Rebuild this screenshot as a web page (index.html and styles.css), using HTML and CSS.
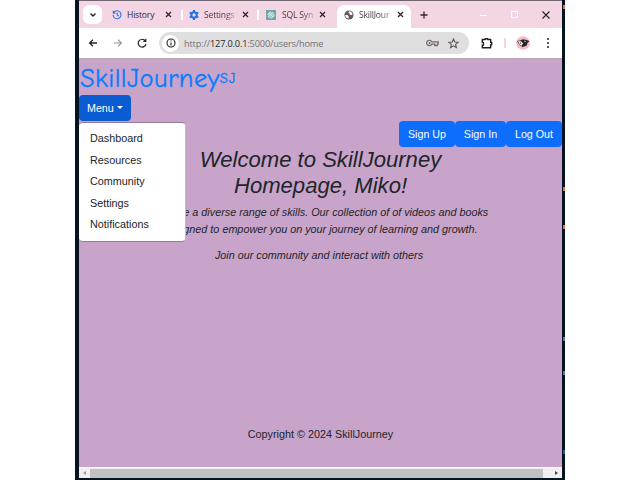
FILE: index.html
```html
<!DOCTYPE html>
<html lang="en">
<head>
<meta charset="utf-8">
<title>SkillJourney</title>
<link rel="stylesheet" href="styles.css">
</head>
<body>
<div class="desktop">
  <div class="window">
    <div class="tabs">
      <div class="tab-search"><svg width="8" height="8" viewBox="0 0 8 8"><path d="M1.5 2.5 4 5l2.5-2.5" fill="none" stroke="#222" stroke-width="1.4"/></svg></div>
      <div class="tab tab-history">
        <svg width="10" height="10" viewBox="0 0 10 10"><path d="M1.6 2.6A4 4 0 1 1 1 5M1.3.8v2.4h2.2M5.2 2.6V5l1.6 1" fill="none" stroke="#2878e8" stroke-width="1.1"/></svg>
        <span class="label">History</span><svg class="close" width="7" height="7"><path d="m1 1 5 5m0-5-5 5"/></svg>
      </div>
      <span class="divider"></span>
      <div class="tab tab-settings">
        <svg width="10" height="10" viewBox="0 0 10 10"><circle cx="5" cy="5" r="2.7" fill="none" stroke="#1a73e8" stroke-width="2"/><path d="M5 0v2M5 8v2M.7 2.5l1.7 1M7.6 6.5l1.7 1M.7 7.5l1.7-1M7.6 3.5l1.7-1" stroke="#1a73e8" stroke-width="2"/></svg>
        <span class="label">Settings</span><svg class="close" width="7" height="7"><path d="m1 1 5 5m0-5-5 5"/></svg>
      </div>
      <span class="divider"></span>
      <div class="tab tab-sql">
        <svg width="10" height="10" viewBox="0 0 10 10"><path d="M0 0h10v10H0z" fill="#70a5a8"/><circle cx="5" cy="5" r="3" fill="#9fc8c5" stroke="#e5f1ef" stroke-dasharray="2 1"/><path d="m3 3 4 4M3 6l3-3" stroke="#e5f1ef" stroke-width=".8"/></svg>
        <span class="label">SQL Syn</span><svg class="close" width="7" height="7"><path d="m1 1 5 5m0-5-5 5"/></svg>
      </div>
      <div class="tab active">
        <svg width="10" height="10" viewBox="0 0 10 10"><circle cx="5" cy="5" r="4.6" fill="#62565f"/><path d="M1.2 5.1h2.2l1.2 1.2v2.2C2.7 8.5 1 7 1.2 5.1M5 1.3 4.3 2.7l1.4.7v1.3l2.7.5C8.8 3 7.3 1.2 5 1.3" fill="#fff"/></svg>
        <span class="label">SkillJour</span><svg class="close" width="7" height="7"><path d="m1 1 5 5m0-5-5 5"/></svg>
      </div>
      <svg class="new-tab" width="8" height="8" viewBox="0 0 8 8"><path d="M4 .5v7M.5 4h7" stroke="#35252e" stroke-width="1.3"/></svg>
      <div class="controls">
        <svg width="8" height="8"><path d="M0 4.5h7" stroke="#fff"/></svg>
        <svg width="8" height="8"><path d="M.5.5h6v6h-6z" fill="none" stroke="#fff"/></svg>
        <svg width="8" height="8"><path d="m.5.5 7 7m0-7-7 7" stroke="#222" stroke-width="1.1"/></svg>
      </div>
    </div>
    <div class="toolbar">
      <svg class="nav" width="10" height="10" viewBox="0 0 10 10"><path d="M9 5H1.6M4.9 1.7 1.6 5l3.3 3.3" fill="none" stroke="#25252b" stroke-width="1.3"/></svg>
      <svg class="nav" width="10" height="10" viewBox="0 0 10 10"><path d="M1 5h7.4M5.1 1.7 8.4 5 5.1 8.3" fill="none" stroke="#9b959a" stroke-width="1.2"/></svg>
      <svg class="nav" width="10" height="10" viewBox="0 0 10 10"><path d="M8.4 3A3.9 3.9 0 1 0 9 5.8M8.8.8v2.6H6.2" fill="none" stroke="#25252b" stroke-width="1.2"/></svg>
      <div class="address">
        <div class="info"><svg width="10" height="10" viewBox="0 0 10 10"><circle cx="5" cy="5" r="4" fill="none" stroke="#222" stroke-width="1.1"/><path d="M5 4.4v3M5 2.4v1.1" stroke="#222" stroke-width="1.1"/></svg></div>
        <span class="url">http://<b>127.0.0.1</b>:5000/users/home</span>
        <svg class="key" width="13" height="8" viewBox="0 0 13 8"><path d="M5.8 2.8h6.4v2.3h-1v1.5H8.7V5.1H5.8A2.7 2.7 0 1 1 5.8 2.8z" fill="none" stroke="#75656f" stroke-width="1.2"/><circle cx="3.5" cy="4" r="1" fill="#75656f"/></svg>
        <svg class="star" width="11" height="11" viewBox="0 0 11 11"><path d="m5.5 1 1.3 3 3.3.3-2.5 2.1.8 3.2-2.9-1.7-2.9 1.7.8-3.2L.9 4.3 4.2 4z" fill="none" stroke="#65545f" stroke-width="1.1"/></svg>
      </div>
      <svg class="puzzle" width="12" height="12" viewBox="0 0 12 12"><path d="M1.3 2.5h3V1.7h2.4v.8h3v3h1v2.3h-1v3H1.3V8.2h1.1V5.4H1.3z" fill="none" stroke="#202027" stroke-width="1.4" stroke-linejoin="round"/></svg>
      <span class="tool-divider"></span>
      <svg class="avatar" width="14" height="14" viewBox="0 0 14 14"><circle cx="7" cy="7" r="6.8" fill="#f8b9bd"/><path d="m1 5 3-.5 3-1.3 3.5.8 3 1-2 2-1 2.7-4 1.2-3-2.2z" fill="#26242b"/><path d="m2 5 3 .3 2 2-1.4 2.5-2-1.5zM8 4.5l2 .7-1 1z" fill="#eee"/><path d="m4 6.7 1 .6" stroke="#222"/></svg>
      <svg class="dots" width="4" height="12" viewBox="0 0 4 12" fill="#222"><circle cx="2" cy="2" r="1"/><circle cx="2" cy="6" r="1"/><circle cx="2" cy="10" r="1"/></svg>
    </div>
    <div class="page">
      <header><a class="brand">SkillJourney<sup>SJ</sup></a></header>
      <nav class="dropdown">
        <button class="button menu-button">Menu<span class="caret"></span></button>
        <div class="menu"><a>Dashboard</a><a>Resources</a><a>Community</a><a>Settings</a><a>Notifications</a></div>
      </nav>
      <div class="account"><button class="button">Sign Up</button><button class="button sign-in">Sign In</button><button class="button">Log Out</button></div>
      <main>
        <h1>Welcome to SkillJourney<br>Homepage, Miko!</h1>
        <p class="intro">Explore a diverse range of skills. Our collection of of videos and books<br>designed to empower you on your journey of learning and growth.</p>
        <p class="join">Join our community and interact with others</p>
      </main>
      <footer>Copyright © 2024 SkillJourney</footer>
    </div>
    <div class="scrollbar"><span class="arrow-left"></span><div class="thumb"></div><span class="arrow-right"></span></div>
  </div>
</div>
</body>
</html>
```
FILE: styles.css
```css
* { box-sizing: border-box; }
body { margin: 0; width: 640px; height: 480px; overflow: hidden; background: #fff; font-family: "Liberation Sans", Arial, sans-serif; }
.desktop { width: 490px; height: 480px; margin-left: 75px; padding: 0 3px 2px 4px; background: linear-gradient(#2457a6, #2457a6) 488px 450px / 2px 4px no-repeat, linear-gradient(#d67a43, #d67a43) 488px 187px / 2px 4px no-repeat, linear-gradient(#d67a43, #d67a43) 488px 225px / 2px 4px no-repeat, linear-gradient(#d67a43, #d67a43) 488px 5px / 2px 4px no-repeat, linear-gradient(#5675b2, #5675b2) 488px 337px / 2px 4px no-repeat, linear-gradient(#5675b2, #5675b2) 488px 371px / 2px 4px no-repeat, #061421; }
.window { width: 483px; height: 478px; display: flex; flex-direction: column; border-top: 1px solid #706570; }
.tabs { height: 27px; flex: none; display: flex; align-items: center; background: #f4d5e3; font: 8.6px "Open Sans", sans-serif; color: #56434e; }
.tab-search { width: 19px; height: 19px; margin-left: 4px; border-radius: 6px; background: #fff; display: flex; align-items: center; justify-content: center; }
.tab { display: flex; align-items: center; flex: none; }
.tab > svg { flex: none; }
.tab-history { width: 79px; padding-left: 10px; }
.tab-settings { width: 74px; padding-left: 6px; }
.tab-sql { width: 78px; padding-left: 7px; }
.label { width: 32px; margin-left: 5px; white-space: nowrap; letter-spacing: -.2px; }
.tab-history .label { color: #34282f; }
.tab-settings .label, .tab-sql .label, .active .label { background: linear-gradient(90deg, #44343d 65%, #b7a6b0 100%); -webkit-background-clip: text; background-clip: text; color: transparent; }
.tab-sql .label { margin-left: 6px; }
.close { margin-left: 6px; stroke: #2c2027; stroke-width: 1.2; }
.tab-sql .close { margin-left: 5px; }
.divider { width: 2px; height: 10px; background: #fff; flex: none; }
.active { width: 74px; height: 23px; align-self: flex-end; padding: 0 0 4px 7px; border-radius: 7px 7px 0 0; background: #fff; }
.new-tab { margin-left: 9px; }
.controls { display: flex; gap: 23px; margin-left: auto; margin-right: 12px; }
.toolbar { height: 31px; flex: none; display: flex; align-items: center; background: #fff; border-bottom: 1px solid #bca7b9; }
.nav { margin-left: 9px; flex: none; }
.nav + .nav { margin-left: 15px; }
.nav + .nav + .nav { margin-left: 14px; }
.address { width: 310px; height: 22px; margin-left: 12px; padding-left: 3px; display: flex; align-items: center; flex: none; border-radius: 11px; background: #e0dfe0; }
.info { width: 17px; height: 17px; border-radius: 50%; background: #fff; display: flex; align-items: center; justify-content: center; flex: none; }
.url { width: 150px; margin-left: 5px; font: 9.2px "Open Sans", sans-serif; color: #746e74; letter-spacing: -.15px; }
.url b { font-weight: 400; color: #25242a; }
.key { margin-left: 92px; flex: none; }
.star { margin-left: 9px; flex: none; }
.puzzle { margin-left: 12px; flex: none; }
.tool-divider { width: 2px; height: 10px; margin-left: 11px; background: #f4d5e3; }
.avatar { margin-left: 10px; }
.dots { margin-left: 16px; }
.page { height: 408px; flex: none; background: #c8a4ca; color: #212529; display: flex; flex-direction: column; }
header { height: 36px; padding-left: 1px; color: #087cff; }
.brand { display: block; font: 26.5px/40px "Comic Sans MS", "Comic Neue", Lato, sans-serif; letter-spacing: .4px; white-space: nowrap; -webkit-text-stroke: .35px #087cff; }
.brand sup { font-size: 14.5px; line-height: 0; vertical-align: 4px; letter-spacing: 1px; }
.button { height: 26px; border: 0; border-radius: 4px; padding: 0 9px; background: #0d6efd; color: #fff; font: 10.7px/26px "Liberation Sans", Arial, sans-serif; white-space: nowrap; }
.dropdown { position: relative; height: 26px; }
.menu-button { display: block; width: 52px; background: #0b5bd3; padding: 0 8px; text-align: left; }
.caret { display: inline-block; margin-left: 3px; vertical-align: 3px; border: 3px solid transparent; border-top-color: #fff; border-bottom: 0; }
.menu { position: absolute; z-index: 1; top: 27px; left: 0; width: 107px; height: 120px; padding: 5px 0 6px 11px; border: 1px solid #967b9a; border-left: 0; border-right-color: #c8b5ca; border-radius: 4px; background: #fff; }
.menu a { display: block; height: 21.5px; font-size: 10.8px; line-height: 21.5px; }
.account { height: 26px; display: flex; justify-content: flex-end; }
.account .button { width: 56px; padding: 0; }
.account .sign-in { width: 51px; }
main { height: 210px; text-align: center; font-style: italic; }
h1 { margin: 0; font-size: 22.1px; line-height: 26px; font-weight: 400; }
p { margin: 0; font-size: 10.8px; line-height: 16.5px; white-space: nowrap; }
.intro { margin-top: 5px; }
.join { margin-top: 10px; padding-right: 3px; }
footer { margin-top: 69px; text-align: center; font-size: 10.8px; line-height: 16px; }
.scrollbar { flex: 1; background: #f1f0f1; border-top: 1px solid #f8f7f8; display: flex; align-items: center; padding: 0 4px; }
.thumb { height: 9px; flex: 1; margin: 0 12px 0 4px; background: #c0c1c0; }
.arrow-left, .arrow-right { border: 2.5px solid transparent; }
.arrow-left { width: 3px; border-left: 0; border-right: 3px solid #a398a5; }
.arrow-right { width: 3px; border-right: 0; border-left: 3px solid #493f4b; }
```
